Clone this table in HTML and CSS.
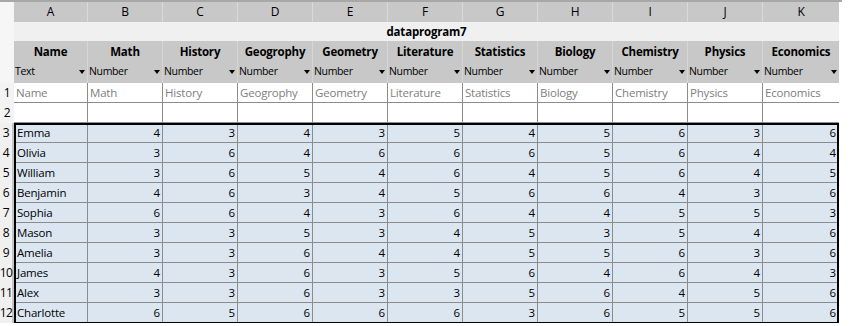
FILE: index.html
```html
<!DOCTYPE html>
<html>
<head>
<meta charset="utf-8">
<link rel="stylesheet" href="styles.css">
</head>
<body>
<div class="sheet">
  <div class="row letters">
    <div class="rh corner"></div>
    <div class="c">A</div><div class="c">B</div><div class="c">C</div><div class="c">D</div><div class="c">E</div><div class="c">F</div><div class="c">G</div><div class="c">H</div><div class="c">I</div><div class="c">J</div><div class="c">K</div>
  </div>
  <div class="row title">
    <div class="rh corner"></div>
    <div class="c span">dataprogram7</div>
  </div>
  <div class="row names">
    <div class="rh corner"></div>
    <div class="c">Name</div><div class="c">Math</div><div class="c">History</div><div class="c">Geogrophy</div><div class="c">Geometry</div><div class="c">Literature</div><div class="c">Statistics</div><div class="c">Biology</div><div class="c">Chemistry</div><div class="c">Physics</div><div class="c">Economics</div>
  </div>
  <div class="row types">
    <div class="rh corner"></div>
    <div class="c"><span>Text</span><i class="arrow"></i></div>
    <div class="c"><span>Number</span><i class="arrow"></i></div>
    <div class="c"><span>Number</span><i class="arrow"></i></div>
    <div class="c"><span>Number</span><i class="arrow"></i></div>
    <div class="c"><span>Number</span><i class="arrow"></i></div>
    <div class="c"><span>Number</span><i class="arrow"></i></div>
    <div class="c"><span>Number</span><i class="arrow"></i></div>
    <div class="c"><span>Number</span><i class="arrow"></i></div>
    <div class="c"><span>Number</span><i class="arrow"></i></div>
    <div class="c"><span>Number</span><i class="arrow"></i></div>
    <div class="c"><span>Number</span><i class="arrow"></i></div>
  </div>
  <div class="row labels">
    <div class="rh">1</div>
    <div class="c">Name</div><div class="c">Math</div><div class="c">History</div><div class="c">Geogrophy</div><div class="c">Geometry</div><div class="c">Literature</div><div class="c">Statistics</div><div class="c">Biology</div><div class="c">Chemistry</div><div class="c">Physics</div><div class="c">Economics</div>
  </div>
  <div class="row blank">
    <div class="rh">2</div>
    <div class="c"></div><div class="c"></div><div class="c"></div><div class="c"></div><div class="c"></div><div class="c"></div><div class="c"></div><div class="c"></div><div class="c"></div><div class="c"></div><div class="c"></div>
  </div>
  <div class="data">
    <div class="row d"><div class="rh sel">3</div><div class="c t">Emma</div><div class="c">4</div><div class="c">3</div><div class="c">4</div><div class="c">3</div><div class="c">5</div><div class="c">4</div><div class="c">5</div><div class="c">6</div><div class="c">3</div><div class="c">6</div></div>
    <div class="row d"><div class="rh sel">4</div><div class="c t">Olivia</div><div class="c">3</div><div class="c">6</div><div class="c">4</div><div class="c">6</div><div class="c">6</div><div class="c">6</div><div class="c">5</div><div class="c">6</div><div class="c">4</div><div class="c">4</div></div>
    <div class="row d"><div class="rh sel">5</div><div class="c t">William</div><div class="c">3</div><div class="c">6</div><div class="c">5</div><div class="c">4</div><div class="c">6</div><div class="c">4</div><div class="c">5</div><div class="c">6</div><div class="c">4</div><div class="c">5</div></div>
    <div class="row d"><div class="rh sel">6</div><div class="c t">Benjamin</div><div class="c">4</div><div class="c">6</div><div class="c">3</div><div class="c">4</div><div class="c">5</div><div class="c">6</div><div class="c">6</div><div class="c">4</div><div class="c">3</div><div class="c">6</div></div>
    <div class="row d"><div class="rh sel">7</div><div class="c t">Sophia</div><div class="c">6</div><div class="c">6</div><div class="c">4</div><div class="c">3</div><div class="c">6</div><div class="c">4</div><div class="c">4</div><div class="c">5</div><div class="c">5</div><div class="c">3</div></div>
    <div class="row d"><div class="rh sel">8</div><div class="c t">Mason</div><div class="c">3</div><div class="c">3</div><div class="c">5</div><div class="c">3</div><div class="c">4</div><div class="c">5</div><div class="c">3</div><div class="c">5</div><div class="c">4</div><div class="c">6</div></div>
    <div class="row d"><div class="rh sel">9</div><div class="c t">Amelia</div><div class="c">3</div><div class="c">3</div><div class="c">6</div><div class="c">4</div><div class="c">4</div><div class="c">5</div><div class="c">5</div><div class="c">6</div><div class="c">3</div><div class="c">6</div></div>
    <div class="row d"><div class="rh sel">10</div><div class="c t">James</div><div class="c">4</div><div class="c">3</div><div class="c">6</div><div class="c">3</div><div class="c">5</div><div class="c">6</div><div class="c">4</div><div class="c">6</div><div class="c">4</div><div class="c">3</div></div>
    <div class="row d"><div class="rh sel">11</div><div class="c t">Alex</div><div class="c">3</div><div class="c">3</div><div class="c">6</div><div class="c">3</div><div class="c">3</div><div class="c">5</div><div class="c">6</div><div class="c">4</div><div class="c">5</div><div class="c">6</div></div>
    <div class="row d"><div class="rh sel">12</div><div class="c t">Charlotte</div><div class="c">6</div><div class="c">5</div><div class="c">6</div><div class="c">6</div><div class="c">6</div><div class="c">3</div><div class="c">6</div><div class="c">5</div><div class="c">5</div><div class="c">6</div></div>
    <div class="selection"></div>
  </div>
</div>
</body>
</html>
```

FILE: styles.css
```css
* { box-sizing: border-box; }
html, body { margin: 0; padding: 0; background: #ffffff; }
body {
  font-family: "Open Sans", "Noto Sans", "Liberation Sans", sans-serif;
  font-size: 11.5px;
  letter-spacing: -0.2px;
  color: #000;
}
.sheet {
  width: 842px;
  border-top: 2px solid #a8a8a8;
}
.row {
  display: grid;
  grid-template-columns: 14px 74px repeat(9, 75px) 76px;
  height: 20px;
  width: 839px;
}
.c {
  display: flex;
  align-items: center;
  white-space: nowrap;
  overflow: hidden;
  line-height: 1;
}
.rh {
  display: flex;
  align-items: center;
  justify-content: center;
  background: #f3f3f3;
  font-size: 12px;
  letter-spacing: -0.5px;
  line-height: 1;
}
.rh.corner { background: #f6f6f6; }

/* column letters */
.letters { background: #c8c8c8; }
.letters .c {
  justify-content: center;
  font-size: 12px;
  border-right: 1px solid #d9d9d9;
}
.letters .c:last-child { border-right: none; }

/* title */
.title { height: 19px; background: #f0f0f0; }
.title .span {
  grid-column: 2 / span 11;
  justify-content: center;
  font-weight: 700;
}

/* field names */
.names { background: #c8c8c8; }
.names .c {
  justify-content: center;
  font-weight: 700;
  border-right: 1px solid #d6d6d6;
  padding-top: 1px;
}
.names .c:last-child { border-right: none; }

/* types */
.types { height: 22px; background: #c8c8c8; }
.types .c {
  justify-content: space-between;
  font-size: 10.5px;
  letter-spacing: -0.35px;
  padding: 0 2px 1px 1px;
  border-right: 1px solid #d6d6d6;
}
.types .c:last-child { border-right: none; }
.arrow {
  display: block;
  width: 0;
  height: 0;
  border-left: 3.5px solid transparent;
  border-right: 3.5px solid transparent;
  border-top: 4px solid #000;
}

/* rows 1-2 */
.labels .c, .blank .c {
  background: #fff;
  border-right: 1px solid #8c8c8c;
  border-bottom: 1px solid #8c8c8c;
  padding-left: 2px;
}
.labels .c { color: #808080; }
.labels .c:last-child, .blank .c:last-child { border-right: none; }

/* data */
.data { position: relative; }
.d .c {
  background: #dce6f1;
  border-right: 1px solid #8c8c8c;
  border-bottom: 1px solid #8c8c8c;
  justify-content: flex-end;
  padding-right: 2px;
}
.d .c.t {
  justify-content: flex-start;
  padding-left: 3px;
}
.rh.sel {
  background: #f0f0f0;
  border-right: 2px solid #c4c4c4;
}
.selection {
  position: absolute;
  left: 14px;
  top: 0;
  width: 825px;
  bottom: -1px;
  border: 2px solid #000;
  pointer-events: none;
}
```
